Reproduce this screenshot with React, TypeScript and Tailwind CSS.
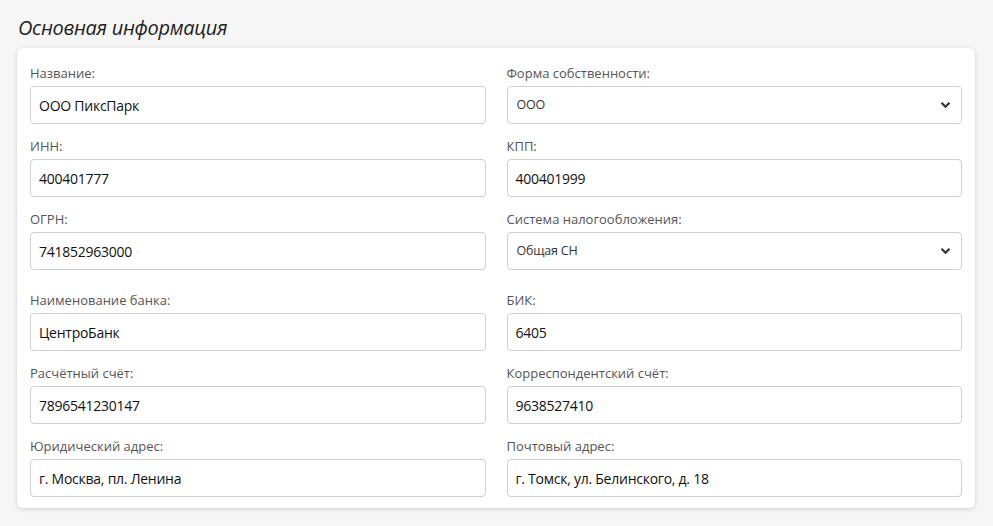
import React from "react";

const font = { fontFamily: '"Open Sans", "Noto Sans", sans-serif' };

function Field({ label, value, select }: { label: string; value: string; select?: boolean }) {
  return (
    <div className="flex flex-col">
      <div className="text-[13px] leading-5 text-[#555] h-5 mb-[3px]">{label}</div>
      {select ? (
        <div className="h-[38px] border border-[#cfcfcf] rounded-[4px] bg-white flex items-center justify-between pl-[9px] pr-[9px]">
          <span className="text-[12.5px] text-[#333] tracking-[-0.2px]">{value}</span>
          <svg width="11" height="8" viewBox="0 0 11 8" className="mr-[1px]">
            <path d="M1.5 1.8 L5.5 5.8 L9.5 1.8" stroke="#333" strokeWidth="2.2" fill="none" />
          </svg>
        </div>
      ) : (
        <div className="h-[38px] border border-[#cfcfcf] rounded-[4px] bg-white flex items-center pl-[8px]">
          <span className="text-[14px] text-[#111] tracking-[-0.25px]">{value}</span>
        </div>
      )}
    </div>
  );
}

export default function App() {
  return (
    <div className="min-h-[526px] w-full bg-[#f6f6f6] px-[17px] pt-[14px] pb-[18px]" style={font}>
      <h2 className="text-[20px] leading-7 italic text-[#222] ml-[1px] mb-[6px] tracking-[-0.3px]">Основная информация</h2>
      <div className="bg-white rounded-[6px] shadow-[0_1px_5px_rgba(0,0,0,0.16)] px-[13px] pt-[15px] pb-[11px] w-[958px]">
        <div className="grid grid-cols-2 gap-x-[21px] gap-y-[12px]">
          <Field label="Название:" value="ООО ПиксПарк" />
          <Field label="Форма собственности:" value="ООО" select />
          <Field label="ИНН:" value="400401777" />
          <Field label="КПП:" value="400401999" />
          <Field label="ОГРН:" value="741852963000" />
          <Field label="Система налогообложения:" value="Общая СН" select />
        </div>
        <div className="grid grid-cols-2 gap-x-[21px] gap-y-[12px] mt-[20px]">
          <Field label="Наименование банка:" value="ЦентроБанк" />
          <Field label="БИК:" value="6405" />
          <Field label="Расчётный счёт:" value="7896541230147" />
          <Field label="Корреспондентский счёт:" value="9638527410" />
          <Field label="Юридический адрес:" value="г. Москва, пл. Ленина" />
          <Field label="Почтовый адрес:" value="г. Томск, ул. Белинского, д. 18" />
        </div>
      </div>
    </div>
  );
}
